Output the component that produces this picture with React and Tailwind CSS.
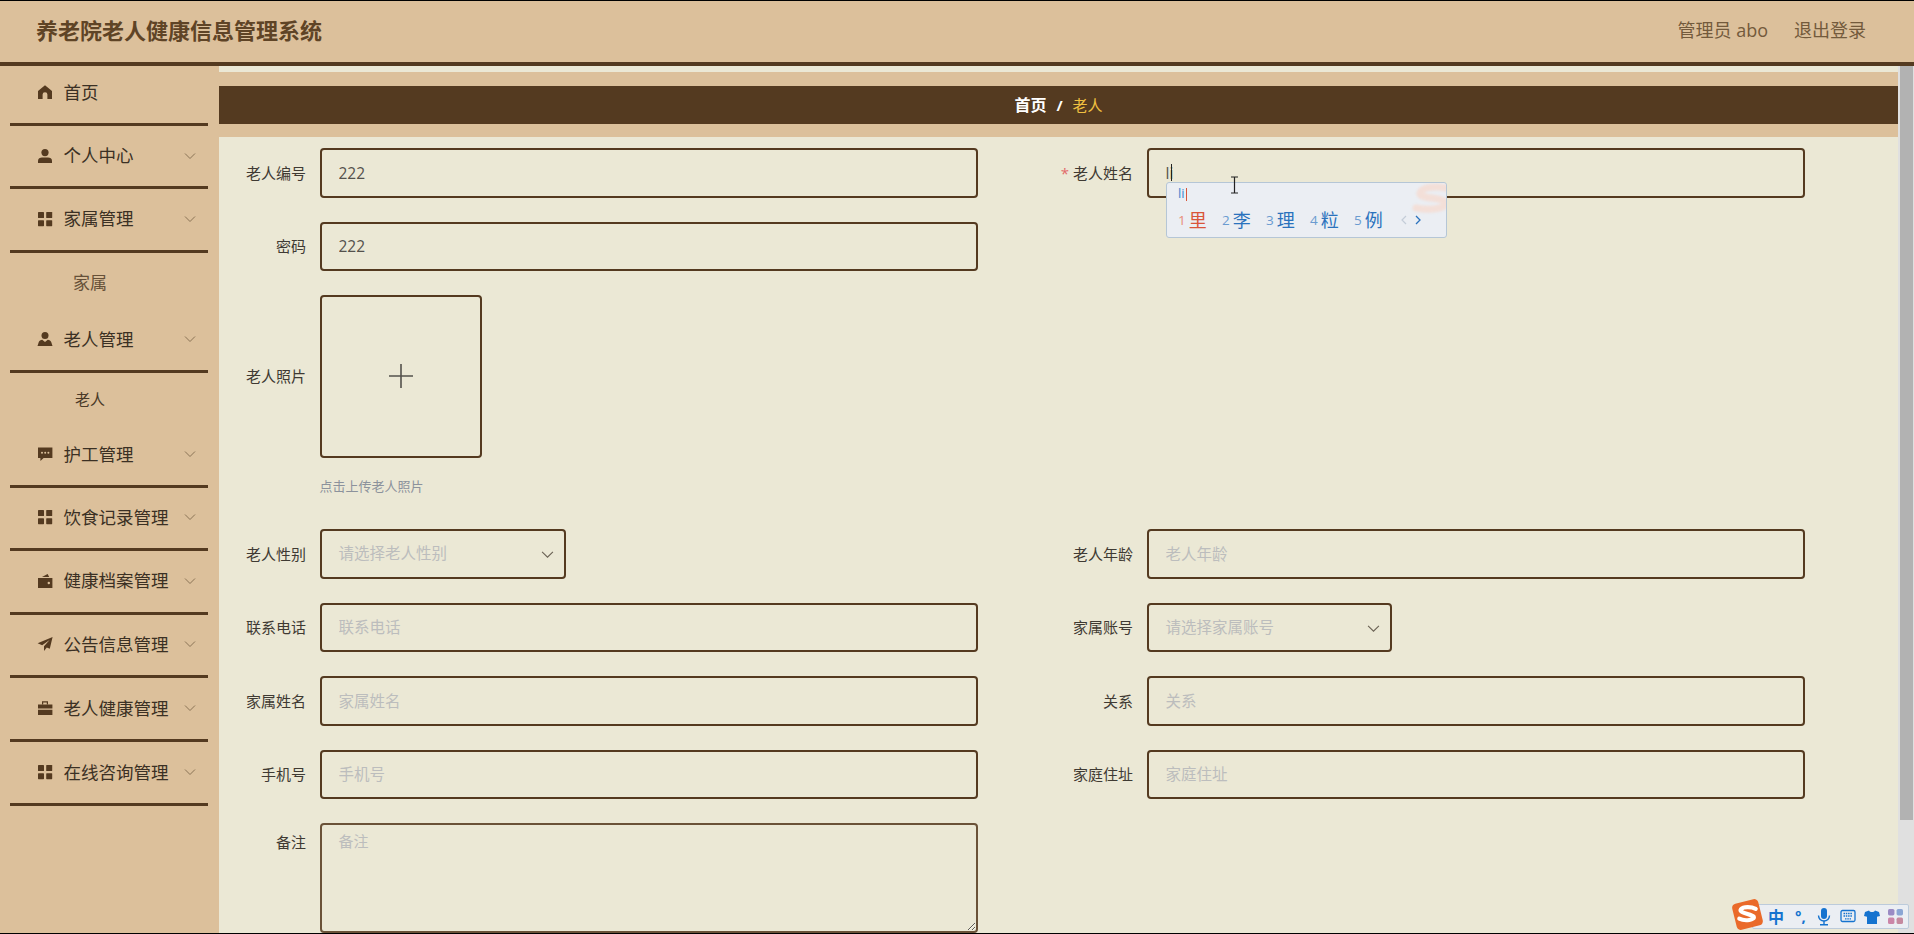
import React from "react";

const brown = "#543a20";
const ic = "w-[16px] h-[16px]";

const HomeIcon = () => (
  <svg viewBox="0 0 16 16" className={ic} fill={brown}><path d="M8 1.200 15 7v8h-4.600v-4.400a2.400 2.400 0 0 0-4.800 0V15H1V7z" /></svg>
);
const UserIcon = () => (
  <svg viewBox="0 0 16 16" className={ic} fill={brown}><circle cx="8" cy="4.600" r="3.600" /><path d="M1 15v-2.200C1 10.600 3 9.600 5 9.600h6c2 0 4 1 4 3.200V15z" /></svg>
);
const CustomIcon = () => (
  <svg viewBox="0 0 16 16" className={ic} fill={brown}><circle cx="8" cy="4.400" r="3.500" /><path d="M.5 15l1.200-3.800C2.200 9.600 3.600 9 5.200 8.800L8 11l2.800-2.200c1.600.2 3 .8 3.500 2.400L15.500 15z" /></svg>
);
const MenuIcon = () => (
  <svg viewBox="0 0 16 16" className={ic} fill={brown}><rect x="1" y="1" width="6" height="6" rx=".6" /><rect x="9.200" y="1" width="6" height="6" rx=".6" /><rect x="1" y="9.200" width="6" height="6" rx=".6" /><rect x="9.200" y="9.200" width="6" height="6" rx=".6" /></svg>
);
const CommentIcon = () => (
  <svg viewBox="0 0 16 16" className={ic}><path fill={brown} d="M1 1.500h14.400v10.600H6.600L3.400 15v-2.900H1z" /><circle cx="5" cy="6.800" r="1" fill="#dcc09b" /><circle cx="8.200" cy="6.800" r="1" fill="#dcc09b" /><circle cx="11.400" cy="6.800" r="1" fill="#dcc09b" /></svg>
);
const WalletIcon = () => (
  <svg viewBox="0 0 16 16" className={ic}><path fill={brown} d="M1 5h14.400v10H1zM5 4l5.600-3 1.600 3z" /><circle cx="11.800" cy="10" r="1.200" fill="#dcc09b" /></svg>
);
const PlaneIcon = () => (
  <svg viewBox="0 0 16 16" className={ic} fill={brown}><path d="M15.600 1 .6 7.200l4.600 2.100L12.600 4 7 10.200V15l2.800-3.400 3 1.200z" /></svg>
);
const BriefcaseIcon = () => (
  <svg viewBox="0 0 16 16" className={ic} fill={brown}><path d="M5 1.200h6v3H9.800V2.600H6.200v1.600H5zM1 4.600h14.400v4H1zM1 9.800h14.400V15H1z" /></svg>
);
const Chevron = ({ cls = "w-[12px] h-[12px]", color = "#8a7355" }) => (
  <svg viewBox="0 0 12 12" className={cls} fill="none" stroke={color} strokeWidth="1"><path d="M1 3.500 6 8.500 11 3.500" /></svg>
);

const menu = [
  { label: "首页", icon: <HomeIcon />, h: "h-[60px] pb-[5px]", noArrow: true },
  { label: "个人中心", icon: <UserIcon />, h: "h-[63px] pb-[1px]" },
  { label: "家属管理", icon: <MenuIcon />, h: "h-[64px] pb-[2px]", sub: "家属", subCls: "h-[54px] text-[17px] text-[#665038] pt-[6px]" },
  { label: "老人管理", icon: <CustomIcon />, h: "h-[66px] pt-[1px]", sub: "老人", subCls: "h-[52px] text-[15px] text-[#4a3a28]" },
  { label: "护工管理", icon: <CommentIcon />, h: "h-[63px] pb-[2px]" },
  { label: "饮食记录管理", icon: <MenuIcon />, h: "h-[63px] pb-[2px]" },
  { label: "健康档案管理", icon: <WalletIcon />, h: "h-[64px] pb-[2px]" },
  { label: "公告信息管理", icon: <PlaneIcon />, h: "h-[63px] pb-[2px]" },
  { label: "老人健康管理", icon: <BriefcaseIcon />, h: "h-[64px] pb-[1px]" },
  { label: "在线咨询管理", icon: <MenuIcon />, h: "h-[64px] pb-[1px]" },
];

const inputCls =
  "block h-[49.5px] rounded-[4px] border-2 border-[#543a20] bg-[#ebe8d5] pl-[17px] pr-[10px] text-[15.5px] text-[#54514c] outline-none placeholder:text-[#bcbdbd]";

const Label = ({ children, required }) => (
  <label className="mr-[13.500px] w-[87px] shrink-0 text-right text-[15px] text-[#3f3a33]">
    {required && <span className="mr-[4px] text-[#e26a6a]">*</span>}
    {children}
  </label>
);

const Field = ({ label, placeholder, value, required }) => (
  <div className="flex items-center">
    <Label required={required}>{label}</Label>
    <input readOnly className={`${inputCls} w-[658.500px]`} placeholder={placeholder} value={value ?? ""} />
  </div>
);

const Select = ({ label, placeholder, width }) => (
  <div className="flex items-center">
    <Label>{label}</Label>
    <div className={`${inputCls} ${width} flex items-center justify-between`}>
      <span className="text-[#bcbdbd]">{placeholder}</span>
      <Chevron cls="w-[13px] h-[13px] mt-[2px]" color="#6b6255" />
    </div>
  </div>
);

const Row = ({ children }) => <div className="mb-[24px] grid grid-cols-[827px_827px]">{children}</div>;

const Cand = ({ n, c, first }) => (
  <span className="flex w-[44px] items-center gap-[3px]">
    <span className={`text-[13.500px] ${first ? "text-[#e88d77]" : "text-[#6a9bd0]"}`}>{n}</span>
    <span className={`text-[18px] leading-none ${first ? "text-[#d9553a]" : "text-[#2a72bd]"}`}>{c}</span>
  </span>
);

export default function App() {
  return (
    <div
      className="relative flex h-[934px] w-[1914px] flex-col overflow-hidden border-t border-b border-black bg-[#ebe8d5]"
      style={{ fontFamily: '"Open Sans", "Noto Sans CJK SC", sans-serif' }}
    >
      <header className="flex h-[65px] shrink-0 items-center justify-between border-b-4 border-[#543a20] bg-[#dcc09b] pb-[3px] pl-[36px] pr-[48px]">
        <h1 className="text-[22px] font-bold text-[#5f4426]">养老院老人健康信息管理系统</h1>
        <div className="flex gap-[26px] text-[18px] text-[#735a3c]">
          <span>管理员 abo</span>
          <span>退出登录</span>
        </div>
      </header>

      <div className="flex min-h-0 flex-1">
        <aside className="w-[219px] shrink-0 bg-[#dcc09b] pl-[10px] pr-[11px]">
          {menu.map((m) => (
            <React.Fragment key={m.label}>
              <div className={`${m.h} flex items-center border-b-[3px] border-[#543a20] pl-[27px] pr-[12px]`}>
                <span className="mr-[10.500px] flex w-[16px] shrink-0">{m.icon}</span>
                <span className="flex-1 whitespace-nowrap text-[17.5px] text-[#3b3024]">{m.label}</span>
                {!m.noArrow && <Chevron />}
              </div>
              {m.sub && <div className={`${m.subCls} flex items-center justify-center pr-[38px]`}>{m.sub}</div>}
            </React.Fragment>
          ))}
        </aside>

        <main className="min-w-0 flex-1">
          <div className="mt-[6px] h-[52px] border-t-[14px] border-[#dcc09b] bg-[#543a20]">
            <div className="flex h-[38px] items-center justify-center text-[15px] font-bold text-white">
              <span className="text-[16px]">首页</span>
              <span className="mx-[10px]">/</span>
              <span className="text-[15px] font-normal text-[#f1c141]">老人</span>
            </div>
          </div>
          <div className="h-[13px] bg-[#dcc09b]" />

          <form className="pt-[11px]">
            <Row>
              <Field label="老人编号" value="222" />
              <Field label="老人姓名" required value="li" />
            </Row>
            <Row>
              <Field label="密码" value="222" />
            </Row>
            <div className="flex items-center">
              <Label>老人照片</Label>
              <div className="flex h-[163px] w-[162.500px] items-center justify-center rounded-[4px] border-2 border-[#543a20] pb-[2px]">
                <svg viewBox="0 0 26 26" className="h-[26px] w-[26px]" stroke="#54514c" strokeWidth="1.600"><path d="M13 1v24M1 13h24" /></svg>
              </div>
            </div>
            <div className="mb-[33px] ml-[100.500px] mt-[18px] h-[20px] text-[13px] leading-[20px] text-[#8c929c]">点击上传老人照片</div>
            <Row>
              <Select label="老人性别" placeholder="请选择老人性别" width="w-[246px]" />
              <Field label="老人年龄" placeholder="老人年龄" />
            </Row>
            <Row>
              <Field label="联系电话" placeholder="联系电话" />
              <Select label="家属账号" placeholder="请选择家属账号" width="w-[245px]" />
            </Row>
            <Row>
              <Field label="家属姓名" placeholder="家属姓名" />
              <Field label="关系" placeholder="关系" />
            </Row>
            <Row>
              <Field label="手机号" placeholder="手机号" />
              <Field label="家庭住址" placeholder="家庭住址" />
            </Row>
            <div className="flex items-start">
              <label className="mr-[13.500px] w-[87px] shrink-0 pt-[8px] text-right text-[15px] text-[#3f3a33]">备注</label>
              <textarea
                readOnly
                placeholder="备注"
                className="h-[110px] w-[658.500px] rounded-[4px] border-2 border-[#6a5238] bg-[#ebe8d5] px-[17px] py-[5px] text-[15px] outline-none placeholder:text-[#bcbdbd]"
              />
            </div>
          </form>
        </main>

        <div className="w-[16px] shrink-0 bg-[#e0e0e0] pl-[2px] pr-[1px]">
          <div className="h-[754px] bg-[#b2b2b2]" />
        </div>
      </div>

      {/* Caret in the name input */}
      <div className="absolute left-[1171px] top-[163px] h-[17px] w-px bg-[#222]" />

      {/* Input method candidate window */}
      <div className="absolute left-[1166px] top-[181px] h-[56px] w-[281px] overflow-hidden rounded-[3px] border border-[#b5c6d6] bg-[#ebeef3] px-[11px]">
        <svg viewBox="0 0 44 36" className="absolute -right-[8px] top-0 h-[36px] w-[44px] blur-[1px]" fill="none" stroke="#f3dfd8" strokeWidth="7" strokeLinecap="round">
          <path d="M40 6C28 2 12 4 10 10c-2 6 24 4 26 10 1 5-14 8-30 5" />
        </svg>
        <div className="relative h-[21px] text-[13px] leading-[21px] text-[#3f86cf]">
          li<span className="ml-[1px] inline-block h-[13px] w-px bg-[#d9553a] align-middle" />
        </div>
        <div className="relative flex items-center pt-[6px]">
          <Cand n="1" c="里" first />
          <Cand n="2" c="李" />
          <Cand n="3" c="理" />
          <Cand n="4" c="粒" />
          <Cand n="5" c="例" />
          <svg viewBox="0 0 6 10" className="ml-[3px] h-[10px] w-[6px]" fill="none" stroke="#c4cdd8" strokeWidth="1.200"><path d="M5 1 1 5l4 4" /></svg>
          <svg viewBox="0 0 6 10" className="ml-[8px] h-[10px] w-[6px]" fill="none" stroke="#2a72bd" strokeWidth="1.300"><path d="M1 1l4 4-4 4" /></svg>
        </div>
      </div>

      {/* Text cursor */}
      <svg viewBox="0 0 9 18" className="absolute left-[1230px] top-[175px] h-[18px] w-[9px]" fill="none" stroke="#222" strokeWidth="1.200">
        <path d="M1 1h7M4.500 1v16M1 17h7" />
      </svg>

      {/* Input method status bar */}
      <div className="absolute left-[1752px] top-[903px] flex h-[25px] w-[157px] items-center gap-[8px] rounded-[2px] border border-[#bccbdb] bg-[#ebeef3] pl-[15px] text-[#1573cf]">
        <span className="w-[16px] text-[16px] font-bold leading-none">中</span>
        <span className="w-[16px] pl-[3px] text-[15px] font-bold leading-none">°,</span>
        <svg viewBox="0 0 14 18" className="h-[18px] w-[16px]" fill="#1573cf"><rect x="4" y="0" width="6" height="11" rx="3" /><path d="M1.500 7.500a5.500 5.500 0 0 0 11 0" fill="none" stroke="#1573cf" strokeWidth="1.400" /><rect x="6.300" y="13" width="1.400" height="3" /><rect x="3" y="16" width="8" height="1.500" /></svg>
        <svg viewBox="0 0 16 14" className="h-[15px] w-[16px]" fill="none" stroke="#1573cf" strokeWidth="1.300"><rect x="1" y="1" width="14" height="11" rx="1.500" /><path d="M3.500 4h9M3.500 6.500h9M5 9.300h6" strokeDasharray="1.500 .8" /></svg>
        <svg viewBox="0 0 16 14" className="h-[16px] w-[16px]" fill="#1573cf"><path d="M5 .5 1 2 0 6l3 .8V14h10V6.800L16 6l-1-4L11 .5C10 2.500 6 2.500 5 .5z" /></svg>
        <svg viewBox="0 0 14 14" className="h-[15px] w-[15px]"><rect x="0" y="0" width="6" height="6" rx="1.500" fill="#9a8bc4" /><rect x="8" y="0" width="6" height="6" rx="1.500" fill="#8ba6d4" /><rect x="0" y="8" width="6" height="6" rx="1.500" fill="#cb86a8" /><rect x="8" y="8" width="6" height="6" rx="1.500" fill="#c58a9f" /></svg>
      </div>
      <svg viewBox="0 0 32 32" className="absolute left-[1731px] top-[897px] h-[33px] w-[33px]">
        <rect x="3" y="3" width="26" height="26" rx="4" fill="#ea6a2a" transform="rotate(-14 16 16)" />
        <path d="M24 10.500c-4-2-12-2.500-14.500.5-2.500 3.500 10.500 4.500 12.500 7 1.500 3-8 5-14 2" fill="none" stroke="#fff" strokeWidth="4" strokeLinecap="round" />
      </svg>
    </div>
  );
}
